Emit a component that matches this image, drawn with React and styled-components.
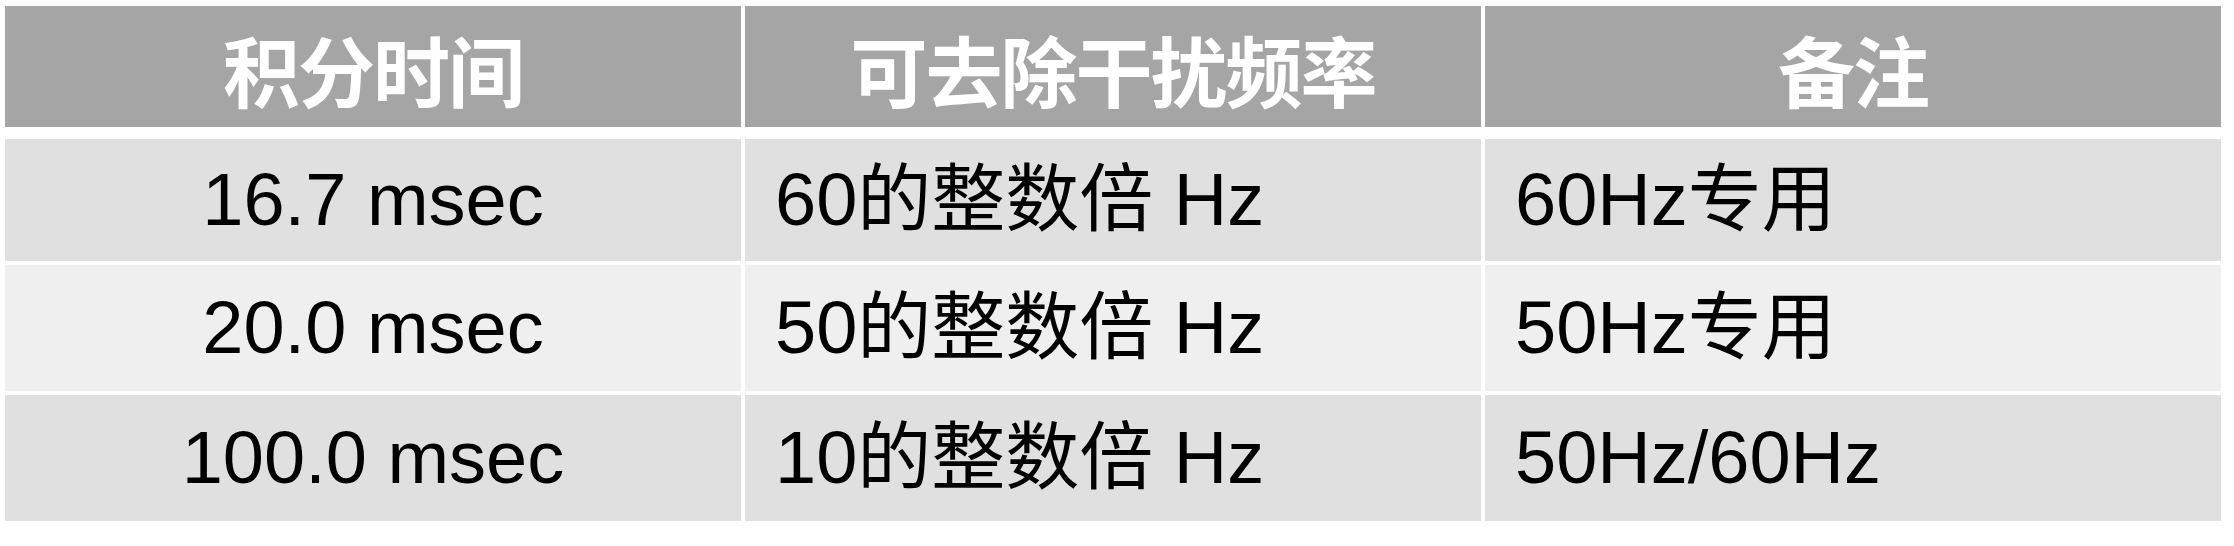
import React from 'react';
import styled, { createGlobalStyle } from 'styled-components';

const GlobalStyle = createGlobalStyle`
  html, body {
    margin: 0;
    padding: 0;
    background: #ffffff;
  }
`;

const Page = styled.div`
  padding: 6px 0 0 5px;
  font-family: 'Liberation Sans', 'Noto Sans CJK SC', sans-serif;
`;

const Table = styled.div`
  display: flex;
  flex-direction: column;
  gap: 4px;
  width: 2216px;
`;

const Row = styled.div`
  display: grid;
  grid-template-columns: 736px 736px 736px;
  column-gap: 4px;
  height: ${(p) => p.$height}px;
  margin-bottom: ${(p) => (p.$head ? 8 : 0)}px;
`;

const tones = {
  head: '#a5a5a5',
  dark: '#e0e0e0',
  light: '#efefef',
};

const Cell = styled.div`
  display: flex;
  align-items: center;
  justify-content: ${(p) => (p.$left ? 'flex-start' : 'center')};
  padding-left: ${(p) => (p.$left ? 30 : 0)}px;
  background: ${(p) => tones[p.$tone]};
  font-size: 74px;
  line-height: 1;
  color: #000000;
  white-space: nowrap;
`;

const HeadCell = styled(Cell)`
  padding-top: 4px;
  box-sizing: border-box;
  color: #ffffff;
  font-family: 'Noto Sans CJK SC', sans-serif;
  font-weight: 700;
  font-size: 77px;
  letter-spacing: -2px;
`;

const headers = ['积分时间', '可去除干扰频率', '备注'];

const rows = [
  { time: '16.7 msec', freq: '60的整数倍 Hz', note: '60Hz专用', tone: 'dark', height: 122 },
  { time: '20.0 msec', freq: '50的整数倍 Hz', note: '50Hz专用', tone: 'light', height: 126 },
  { time: '100.0 msec', freq: '10的整数倍 Hz', note: '50Hz/60Hz', tone: 'dark', height: 126 },
];

export default function App() {
  return (
    <>
      <GlobalStyle />
      <Page>
        <Table>
          <Row $height={121} $head>
            {headers.map((h) => (
              <HeadCell key={h} $tone="head">
                {h}
              </HeadCell>
            ))}
          </Row>
          {rows.map((r) => (
            <Row key={r.time} $height={r.height}>
              <Cell $tone={r.tone}>{r.time}</Cell>
              <Cell $tone={r.tone} $left>
                {r.freq}
              </Cell>
              <Cell $tone={r.tone} $left>
                {r.note}
              </Cell>
            </Row>
          ))}
        </Table>
      </Page>
    </>
  );
}
